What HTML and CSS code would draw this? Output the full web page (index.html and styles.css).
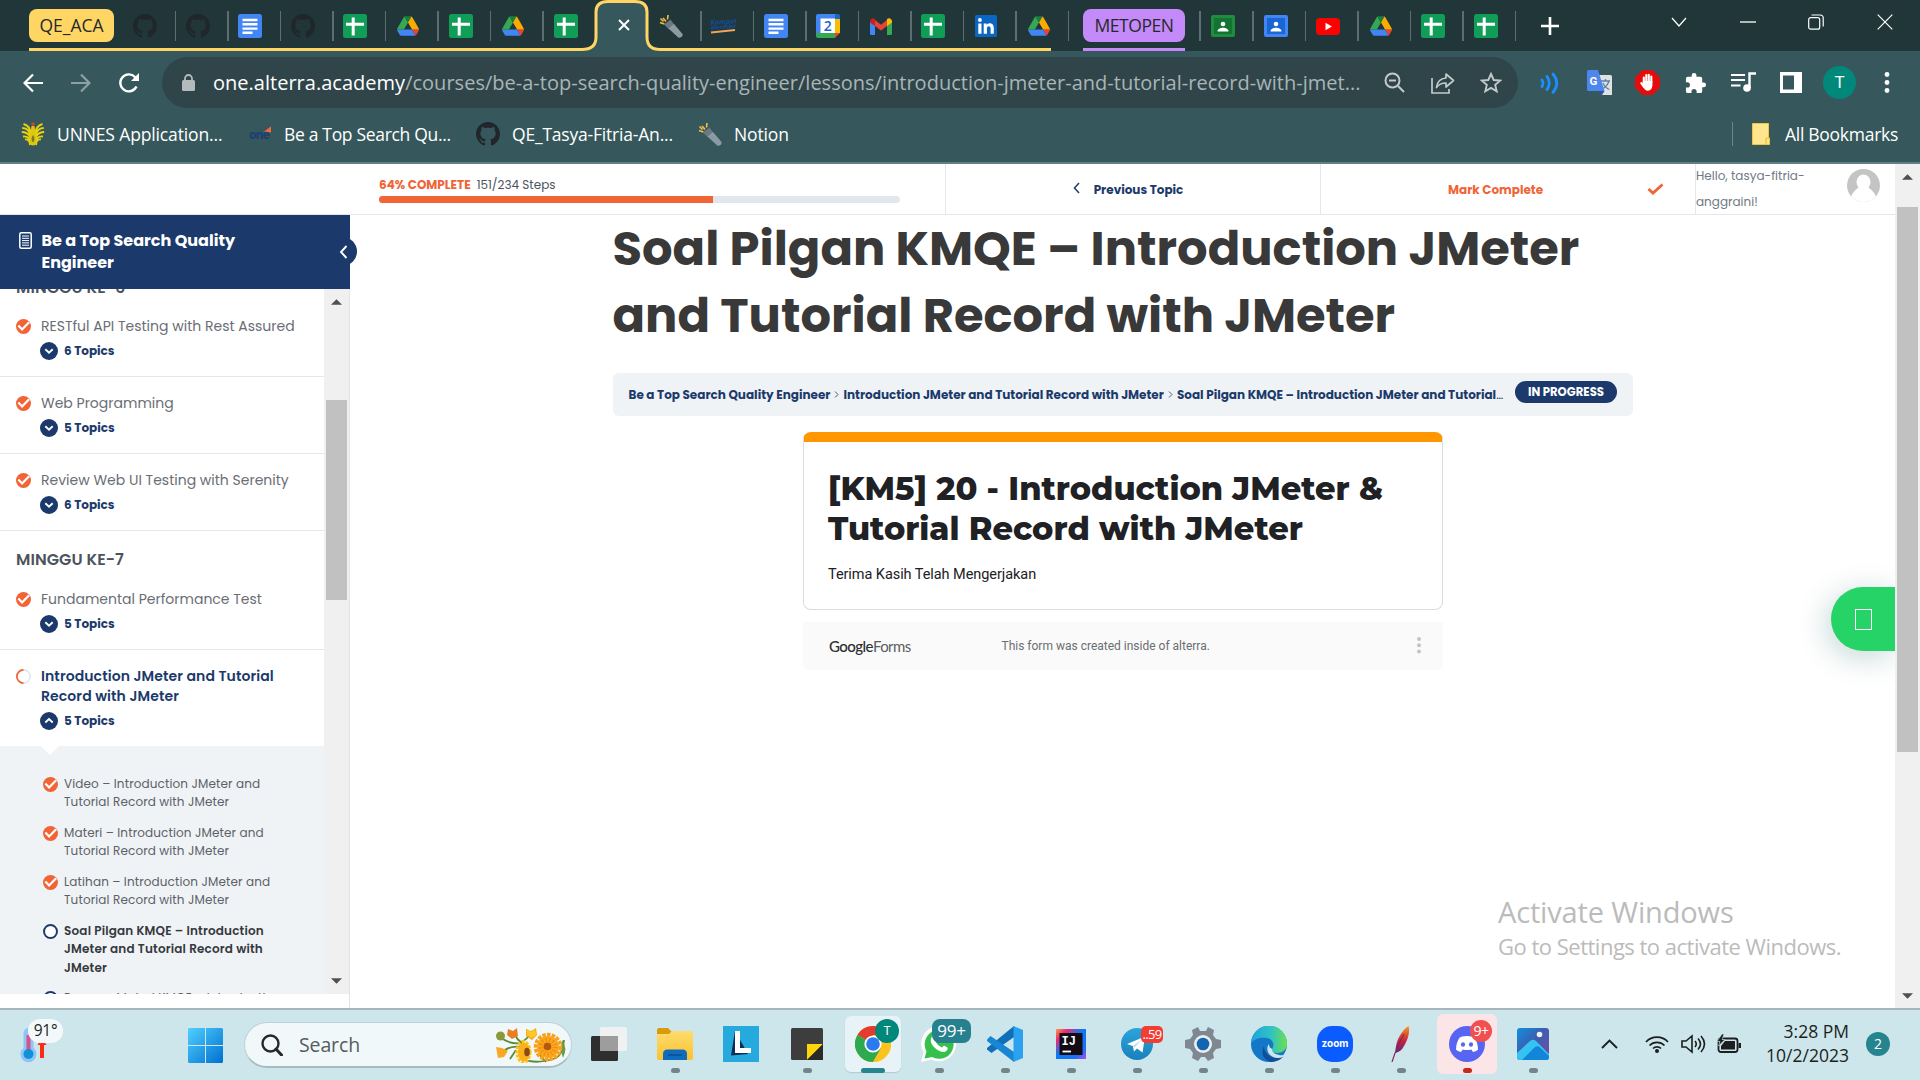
FILE: index.html
```html
<!DOCTYPE html>
<html lang="en">
<head>
<meta charset="utf-8">
<title>Soal Pilgan KMQE – Introduction JMeter and Tutorial Record with JMeter</title>
<link rel="stylesheet" href="styles.css">
</head>
<body>
<svg class="defs" aria-hidden="true">
  <defs>
    <linearGradient id="win" x1="0" y1="0" x2="1" y2="1"><stop offset="0" stop-color="#4fd0ff"/><stop offset="1" stop-color="#0070d0"/></linearGradient>
    <linearGradient id="folderg" x1="0" y1="0" x2="0" y2="1"><stop offset="0" stop-color="#ffdc6e"/><stop offset="1" stop-color="#f9c22e"/></linearGradient>
    <linearGradient id="tgg" x1="0" y1="0" x2="0" y2="1"><stop offset="0" stop-color="#2ca4dc"/><stop offset="1" stop-color="#1a80bb"/></linearGradient>
    <linearGradient id="ijg" x1="0" y1="0" x2="1" y2="1"><stop offset="0" stop-color="#f9a03c"/><stop offset=".2" stop-color="#f0267a"/><stop offset=".45" stop-color="#0a7bf5"/><stop offset=".8" stop-color="#1e6ff5"/><stop offset="1" stop-color="#b54bf0"/></linearGradient>
    <linearGradient id="edgeg" x1="0" y1="0" x2="1" y2="0"><stop offset="0" stop-color="#1fa3e0"/><stop offset=".55" stop-color="#2fc2c4"/><stop offset="1" stop-color="#6be04e"/></linearGradient>
    <linearGradient id="feather" x1="0" y1="1" x2="0" y2="0"><stop offset="0" stop-color="#5a2a82"/><stop offset=".45" stop-color="#c9203c"/><stop offset="1" stop-color="#f79a23"/></linearGradient>
    <linearGradient id="photo" x1="0" y1="0" x2="1" y2="1"><stop offset="0" stop-color="#128fe0"/><stop offset=".45" stop-color="#3b5fb0"/><stop offset="1" stop-color="#7a4aa0"/></linearGradient>
    <symbol id="github" viewBox="0 0 16 16"><path fill="#20262b" d="M8 0C3.58 0 0 3.58 0 8c0 3.54 2.29 6.53 5.47 7.59.4.07.55-.17.55-.38 0-.19-.01-.82-.01-1.49-2.01.37-2.53-.49-2.69-.94-.09-.23-.48-.94-.82-1.13-.28-.15-.68-.52-.01-.53.63-.01 1.08.58 1.23.82.72 1.21 1.87.87 2.33.66.07-.52.28-.87.51-1.07-1.78-.2-3.64-.89-3.64-3.95 0-.87.31-1.59.82-2.15-.08-.2-.36-1.02.08-2.12 0 0 .67-.21 2.2.82.64-.18 1.32-.27 2-.27s1.36.09 2 .27c1.53-1.04 2.2-.82 2.2-.82.44 1.1.16 1.92.08 2.12.51.56.82 1.27.82 2.15 0 3.07-1.87 3.75-3.65 3.95.29.25.54.73.54 1.48 0 1.07-.01 1.93-.01 2.2 0 .21.15.46.55.38A8.01 8.01 0 0 0 16 8c0-4.42-3.58-8-8-8z"/></symbol>
    <symbol id="docs" viewBox="0 0 24 24"><rect width="24" height="24" rx="2.5" fill="#4285f4"/><path d="M4.5 6h15M4.5 10.300h15M4.500 14.600h15M4.500 18.700h10" stroke="#fff" stroke-width="2.400"/></symbol>
    <symbol id="sheets" viewBox="0 0 24 24"><rect width="24" height="24" rx="2.500" fill="#0f9d58"/><path d="M10.200 3.500v18M3 10.200h18" stroke="#fff" stroke-width="3"/></symbol>
    <symbol id="drive" viewBox="0 0 87.300 78"><path fill="#4285f4" d="M6.600 66.850l3.850 6.650c.8 1.400 1.950 2.500 3.300 3.300L27.500 53H0c0 1.550.4 3.100 1.200 4.500zM27.500 53h32.300l13.750 23.800c-1.350.8-2.900 1.200-4.500 1.200H18.250c-1.600 0-3.150-.45-4.500-1.200z"/><path fill="#34a853" d="M43.650 25L29.900 1.200c-1.350.8-2.500 1.900-3.300 3.300L1.200 48.500C.4 49.900 0 51.450 0 53h27.500z"/><path fill="#ea4335" d="M73.550 76.800c1.350-.8 2.500-1.900 3.300-3.300l9.250-16c.8-1.400 1.200-2.950 1.200-4.500H59.800z"/><path fill="#188038" d="M43.650 25L57.400 1.200C56.050.4 54.500 0 52.900 0H34.400c-1.600 0-3.150.45-4.500 1.200z"/><path fill="#fbab00" d="M73.400 26.500L60.700 4.500c-.8-1.400-1.950-2.500-3.300-3.300L43.650 25 59.800 53h27.450c0-1.550-.4-3.100-1.200-4.500z"/></symbol>
    <symbol id="torch" viewBox="0 0 24 24"><path d="M1 8.500l4.500 1.500M4 4l3 3.500M9 1l-.5 4.500M1.500 4.500l3 3" stroke="#f4bd45" stroke-width="1.600"/><path d="M5 10.500L11.500 5.500l4 5.500-5.500 4.500z" fill="#6d7880"/><path d="M9.500 14.500l5.500-4.500 8.500 10c.8 2-2 4.300-4 3.800z" fill="#8c9aa3"/></symbol>
    <symbol id="kampus" viewBox="0 0 26 16"><text x="0" y="7" font-family="Open Sans, sans-serif" font-style="italic" font-weight="700" font-size="7.200" fill="#174d92" transform="rotate(-4)">Kampus</text><text x="0" y="12" font-family="Open Sans, sans-serif" font-style="italic" font-weight="700" font-size="6" fill="#174d92" transform="rotate(-5)">Merdeka</text><path d="M1 14.500L25 12" stroke="#f0a35a" stroke-width="2"/></symbol>
    <symbol id="cal" viewBox="0 0 24 24"><path d="M0 2q0-2 2-2h17v5H5v14H0z" fill="#4285f4"/><path d="M19 0h3q2 0 2 2v3h-5z" fill="#1967d2"/><path d="M19 5h5v14h-5z" fill="#fbbc04"/><path d="M0 19h19v5H2q-2 0-2-2z" fill="#34a853"/><path d="M19 19h5l-5 5z" fill="#ea4335"/><path d="M4.500 4.500H19V19H4.500z" fill="#fff"/><text x="11.800" y="17" text-anchor="middle" font-family="Open Sans, sans-serif" font-size="14" font-weight="600" fill="#1a5fd0">2</text></symbol>
    <symbol id="gmail" viewBox="0 0 22 17"><path d="M0 3v12.500Q0 17 1.500 17H5V7z" fill="#4285f4"/><path d="M22 3v12.500q0 1.500-1.500 1.500H17V7z" fill="#34a853"/><path d="M5 2l6 4.800L17 2v6l-6 4.500L5 8z" fill="#ea4335"/><path d="M0 3.500C0 .5 3-.8 5 1v7L0 4.500z" fill="#c5221f"/><path d="M22 3.500C22 .5 19-.8 17 1v7l5-3.500z" fill="#fbbc04"/></symbol>
    <symbol id="linkedin" viewBox="0 0 22 22"><rect width="22" height="22" rx="1.500" fill="#0a66c2"/><path d="M3.300 8.500h3.200v10.200H3.300zM8.700 8.500h3v1.400c1.600-2.500 7.100-2.200 7.100 2.800v6h-3.200v-5.200c0-3.200-3.700-2.900-3.700 0v5.200H8.700z" fill="#fff"/><circle cx="4.900" cy="5" r="1.900" fill="#fff"/></symbol>
    <symbol id="classg" viewBox="0 0 24 22"><rect width="24" height="22" rx="2" fill="#1e8e3e"/><rect x="3" y="3" width="18" height="16" fill="#137333"/><circle cx="12" cy="9" r="2.300" fill="#fff"/><path d="M6.500 16.500c0-5 11-5 11 0z" fill="#fff"/></symbol>
    <symbol id="classb" viewBox="0 0 24 22"><rect width="24" height="22" rx="2" fill="#4285f4"/><rect x="3" y="3" width="18" height="16" fill="#1967d2"/><circle cx="12" cy="9" r="2.300" fill="#fff"/><path d="M6.500 16.500c0-5 11-5 11 0z" fill="#fff"/></symbol>
    <symbol id="youtube" viewBox="0 0 24 17"><rect width="24" height="17" rx="4" fill="#f00"/><path d="M9.500 4.700l6.500 3.800-6.500 3.800z" fill="#fff"/></symbol>
    <symbol id="check" viewBox="0 0 16 16"><circle cx="8" cy="8" r="8" fill="#f06436"/><path d="M2.500 7l4 4.200L14 3.500" fill="none" stroke="#fff" stroke-width="2.400"/></symbol>
    <symbol id="down" viewBox="0 0 18 18"><circle cx="9" cy="9" r="9" fill="#1b3a6b"/><path d="M5.300 7.300L9 10.700l3.700-3.400" fill="none" stroke="#fff" stroke-width="1.900"/></symbol>
    <symbol id="up" viewBox="0 0 18 18"><circle cx="9" cy="9" r="9" fill="#1b3a6b"/><path d="M5.300 10.500L9 7.100l3.700 3.400" fill="none" stroke="#fff" stroke-width="1.900"/></symbol>
    <symbol id="ring" viewBox="0 0 16 16"><circle cx="8" cy="8" r="6.900" fill="#fff" stroke="#1b3a6b" stroke-width="2.100"/></symbol>
    <symbol id="half" viewBox="0 0 16 16"><circle cx="8" cy="8" r="7.100" fill="none" stroke="#e2e7ed" stroke-width="1.700"/><path d="M8 .9a7.100 7.100 0 0 0 0 14.200" fill="none" stroke="#f06436" stroke-width="1.800"/></symbol>
    <symbol id="tri-up" viewBox="0 0 12 6"><path d="M0 6L6 0l6 6z" fill="#505050"/></symbol>
    <symbol id="tri-down" viewBox="0 0 12 6"><path d="M0 0l6 6 6-6z" fill="#505050"/></symbol>
  </defs>
</svg>

<header class="browser">
  <div class="strip">
    <div class="group">
      <svg class="outline" width="1022" height="52" viewBox="29 0 1022 52"><path d="M582 52Q596 50 596 38V12Q596 1.500 608 1.500h27Q647 1.500 647 12v26q0 12 13 14z" fill="#36585c"/><path d="M29 49.500H582Q596 49.500 596 37V12Q596 1.500 608 1.500h27Q647 1.500 647 12V37q0 12.500 13 12.500H1051" fill="none" stroke="#ffd664" stroke-width="3"/></svg>
      <span class="label label-qe">QE_ACA</span>
      <span class="tab"><svg width="24" height="24"><use href="#github"/></svg></span>
      <span class="tab"><svg width="24" height="24"><use href="#github"/></svg></span>
      <span class="tab"><svg width="24" height="24"><use href="#docs"/></svg></span>
      <span class="tab"><svg width="24" height="24"><use href="#github"/></svg></span>
      <span class="tab"><svg width="24" height="24"><use href="#sheets"/></svg></span>
      <span class="tab"><svg width="22" height="20"><use href="#drive"/></svg></span>
      <span class="tab"><svg width="24" height="24"><use href="#sheets"/></svg></span>
      <span class="tab"><svg width="22" height="20"><use href="#drive"/></svg></span>
      <span class="tab plain"><svg width="24" height="24"><use href="#sheets"/></svg></span>
      <span class="tab active"><svg width="12" height="12" viewBox="0 0 12 12"><path d="M1 1l10 10M11 1L1 11" stroke="#fff" stroke-width="2"/></svg></span>
      <span class="tab"><svg width="24" height="24"><use href="#torch"/></svg></span>
      <span class="tab"><svg width="26" height="16"><use href="#kampus"/></svg></span>
      <span class="tab"><svg width="24" height="24"><use href="#docs"/></svg></span>
      <span class="tab"><svg width="24" height="24"><use href="#cal"/></svg></span>
      <span class="tab"><svg width="22" height="17"><use href="#gmail"/></svg></span>
      <span class="tab"><svg width="24" height="24"><use href="#sheets"/></svg></span>
      <span class="tab"><svg width="22" height="22"><use href="#linkedin"/></svg></span>
      <span class="tab"><svg width="22" height="20"><use href="#drive"/></svg></span>
    </div>
    <div class="group-met"><span class="label label-met">METOPEN</span></div>
    <div class="loose">
      <span class="tab"><svg width="24" height="22"><use href="#classg"/></svg></span>
      <span class="tab"><svg width="24" height="22"><use href="#classb"/></svg></span>
      <span class="tab"><svg width="24" height="17"><use href="#youtube"/></svg></span>
      <span class="tab"><svg width="22" height="20"><use href="#drive"/></svg></span>
      <span class="tab"><svg width="24" height="24"><use href="#sheets"/></svg></span>
      <span class="tab"><svg width="24" height="24"><use href="#sheets"/></svg></span>
    </div>
    <svg class="plus" width="18" height="18" viewBox="0 0 18 18"><path d="M9 0v18M0 9h18" stroke="#fff" stroke-width="2.600"/></svg>
    <div class="window">
      <svg width="16" height="16" viewBox="0 0 16 16"><path d="M1 4l7 8 7-8" fill="none" stroke="#fff" stroke-width="1.200"/></svg>
      <svg width="16" height="16" viewBox="0 0 16 16"><path d="M0 8h16" stroke="#fff" stroke-width="1.300"/></svg>
      <svg width="16" height="16" viewBox="0 0 16 16"><rect x=".7" y="3.700" width="11" height="11.500" rx="2" fill="none" stroke="#fff" stroke-width="1.200"/><path d="M3.500 1h8.500q3.200 0 3.200 3v8.500" fill="none" stroke="#fff" stroke-width="1.200"/></svg>
      <svg width="16" height="16" viewBox="0 0 16 16"><path d="M.7.700l14.600 14.600M15.300.700L.7 15.300" stroke="#fff" stroke-width="1.200"/></svg>
    </div>
  </div>

  <div class="toolbar">
    <svg width="20" height="20" viewBox="0 0 20 20"><path d="M20 10H2M10 1.500L1.500 10l8.500 8.500" fill="none" stroke="#fff" stroke-width="2.200"/></svg>
    <svg class="fwd" width="20" height="20" viewBox="0 0 20 20"><path d="M0 10h18M10 1.500l8.500 8.500-8.500 8.500" fill="none" stroke="#8da0a3" stroke-width="2.200"/></svg>
    <svg class="reload" width="22" height="22" viewBox="0 0 22 22"><path d="M18.500 14.500a8.500 8.500 0 1 1-1.500-9.500l2 2" fill="none" stroke="#fff" stroke-width="2.400"/><path d="M21 1v8h-8z" fill="#fff"/></svg>
    <div class="omnibox">
      <svg width="13" height="17" viewBox="0 0 13 17"><rect y="6" width="13" height="11" rx="1.500" fill="#b4bbbd"/><path d="M3 7V4.500a3.500 3.500 0 0 1 7 0V7" fill="none" stroke="#b4bbbd" stroke-width="1.800"/></svg>
      <span class="url"><b>one.alterra.academy</b>/courses/be-a-top-search-quality-engineer/lessons/introduction-jmeter-and-tutorial-record-with-jmet...</span>
      <svg class="o-zoom" width="21" height="21" viewBox="0 0 21 21"><circle cx="8.500" cy="8.500" r="7" fill="none" stroke="#c3cacb" stroke-width="2"/><path d="M5 8.500h7M14 14l6 6" stroke="#c3cacb" stroke-width="2"/></svg>
      <svg class="o-share" width="24" height="22" viewBox="0 0 24 22"><path d="M1 6v15h17v-4" fill="none" stroke="#c3cacb" stroke-width="1.700"/><path d="M15 2l7.500 6.500L15 15v-4c-4.500 0-7.500 1.500-9.500 4.500C6 10.500 9 6.500 15 6z" fill="none" stroke="#c3cacb" stroke-width="1.700" stroke-linejoin="round"/></svg>
      <svg class="o-star" width="22" height="21" viewBox="0 0 22 21"><path d="M11 2l2.700 6 6.500.600-5 4.300 1.500 6.400L11 15.900l-5.700 3.400 1.500-6.400-5-4.300 6.500-.6z" fill="none" stroke="#c3cacb" stroke-width="1.900"/></svg>
    </div>
    <div class="exts">
      <svg width="21" height="22" viewBox="0 0 21 22"><path d="M2 8q2 3 0 6.500M7 4.500q4.500 6.500 0 13M13 2q7.500 9 0 18.500" fill="none" stroke="#1a90ff" stroke-width="2.800" stroke-linecap="round"/></svg>
      <svg width="25" height="25" viewBox="0 0 25 25"><path d="M9 5h14.500q1.500 0 1.500 1.500V25H15z" fill="#dfe1e3"/><path d="M14 11h9M18.500 9v2M22 11q-2 6-7 8M16 13q2 5 6.500 6.500" fill="none" stroke="#5f7fa0" stroke-width="1.300"/><path d="M1.500 0H11l6.500 21H1.500Q0 21 0 19.500v-18Q0 0 1.500 0z" fill="#4c86ee"/><path d="M12.500 21h5L15 25z" fill="#2a50b8"/><text x="2.500" y="14.500" font-family="Roboto, sans-serif" font-weight="700" font-size="11.500" fill="#fff">G</text></svg>
      <svg width="25" height="25" viewBox="0 0 25 25"><path d="M7.500 0h10L25 7.500v10L17.500 25h-10L0 17.500v-10z" fill="#e40c0c"/><g fill="none" stroke="#fff" stroke-width="2.100" stroke-linecap="round"><path d="M8.800 13V7.500M11.300 12V5M13.800 12V4.800M16.300 12V6.500M6.300 13.200L9 17"/></g><path d="M7.800 11h9.600v4.500q-.5 5-4.500 5.200-3 0-5.100-4.200z" fill="#fff"/></svg>
      <svg width="23" height="22" viewBox="0 0 24 23"><path d="M20.500 11H19V7q0-2-2-2h-4V3.500a2.500 2.500 0 0 0-5 0V5H4Q2 5 2 7v3.800h1.500a2.700 2.700 0 0 1 0 5.400H2V20q0 2 2 2h3.800v-1.500a2.700 2.700 0 0 1 5.400 0V22H17q2 0 2-2v-4h1.500a2.500 2.500 0 0 0 0-5z" fill="#fff"/></svg>
      <svg width="25" height="21" viewBox="0 0 25 21"><path d="M0 3h14M0 8h14M0 13.500h9.500" stroke="#fff" stroke-width="2.200"/><path d="M18.500 16V1.500H25" fill="none" stroke="#fff" stroke-width="2.400"/><circle cx="16" cy="16" r="3.800" fill="#fff"/></svg>
      <svg width="22" height="21" viewBox="0 0 22 21"><path d="M0 0h22v21H0z" fill="#fff"/><path d="M3 3.500h11v14H3z" fill="#36585c"/></svg>
      <span class="avatar">T</span>
      <svg width="6" height="21" viewBox="0 0 6 21"><g fill="#fff"><circle cx="3" cy="2.500" r="2.400"/><circle cx="3" cy="10.500" r="2.400"/><circle cx="3" cy="18.500" r="2.400"/></g></svg>
    </div>
  </div>

  <div class="bookmarks">
    <a class="bm bm1"><svg width="24" height="24" viewBox="0 0 24 24"><g fill="none" stroke="#e8d20a" stroke-width="1.900"><path d="M9 23Q7.500 17 9.500 12 9.500 4 2.500 2M9 12Q7 6 1.200 6M8.500 14Q6 10 .8 10M8 16.500Q5.500 14 2 14.500M8 19q-2-2-4-1.500M15 23q1.500-6-.5-11 0-8 7-10M15 12q2-6 7.800-6M15.500 14q2.500-4 7.700-4M16 16.500q2.500-2.500 6-2M16 19q2-2 4-1.500"/></g><path d="M9 22q-1-7 .5-11L10.500 4h3l1 7q1.500 4 .5 11-3 3-6 0z" fill="#dcc614"/><path d="M12 13q3 4 0 7.500-3-3.500 0-7.500" fill="#7f7a20"/><circle cx="12" cy="2" r="1.800" fill="#d8402a"/></svg>UNNES Application...</a>
    <a class="bm bm2"><svg width="23" height="16" viewBox="0 0 23 16"><text x="0" y="13" font-family="Inter, sans-serif" font-weight="800" font-size="12" letter-spacing="-.7" fill="#1d3f72">one</text><path d="M15 5.500L22 .5v6z" fill="#ee6b3f"/></svg>Be a Top Search Qu...</a>
    <a class="bm bm3"><svg width="24" height="24"><use href="#github"/></svg>QE_Tasya-Fitria-An...</a>
    <a class="bm bm4"><svg width="24" height="24"><use href="#torch"/></svg>Notion</a>
    <a class="bm all"><svg width="18" height="22" viewBox="0 0 18 22"><path d="M.5.500h16V15h1v6.500H.5z" fill="#ffe58c" stroke="#f0c63c"/><path d="M14 21.500V15h3.500" fill="none" stroke="#e8bc2c"/></svg>All Bookmarks</a>
  </div>
</header>

<main class="page">
  <section class="content">
    <div class="topbar">
      <div class="progress">
        <div class="progress-text"><b>64% COMPLETE</b><span>151/234 Steps</span></div>
        <div class="track"><i style="width:64.2%"></i></div>
      </div>
      <div class="prev"><svg width="7" height="12" viewBox="0 0 7 12"><path d="M6 1L1.500 6 6 11" fill="none" stroke="#1b3a6b" stroke-width="1.500"/></svg>Previous Topic</div>
      <div class="mark"><span>Mark Complete</span><svg width="17" height="12" viewBox="0 0 17 12"><path d="M1.500 6L6 10 15.500 1.500" fill="none" stroke="#f06436" stroke-width="2.800"/></svg></div>
      <div class="hello"><span>Hello, tasya-fitria-<br>anggraini!</span><svg width="33" height="33" viewBox="0 0 33 33"><circle cx="16.500" cy="16.500" r="16.500" fill="#c4c4c4"/><clipPath id="av"><circle cx="16.500" cy="16.500" r="16.500"/></clipPath><g fill="#fff" clip-path="url(#av)"><ellipse cx="16.500" cy="13" rx="7" ry="7.500"/><path d="M3 33C3 24 10 20 12 18h9c2 2 9 6 9 15z"/></g></svg></div>
    </div>

    <div class="body">
      <aside class="sidebar">
        <div class="course"><svg width="13" height="17" viewBox="0 0 13 17"><rect x=".8" y=".8" width="11.400" height="15.400" rx="1.500" fill="none" stroke="#fff" stroke-width="1.500"/><path d="M3 4h7M3 6.300h7M3 8.600h7M3 10.900h7M3 13.200h7" stroke="#fff"/></svg><span>Be a Top Search Quality<br>Engineer</span>
          <i class="toggle"><svg width="9" height="14" viewBox="0 0 9 14"><path d="M7.500 1L2 7l5.500 6" fill="none" stroke="#fff" stroke-width="1.900"/></svg></i>
        </div>
        <div class="scroller">
          <div class="lessons">
            <h3 class="week first">MINGGU KE-6</h3>
            <div class="lesson"><svg class="st" width="15" height="15"><use href="#check"/></svg><p>RESTful API Testing with Rest Assured</p><div class="topics"><svg width="18" height="18"><use href="#down"/></svg>6 Topics</div></div>
            <div class="lesson"><svg class="st" width="15" height="15"><use href="#check"/></svg><p>Web Programming</p><div class="topics"><svg width="18" height="18"><use href="#down"/></svg>5 Topics</div></div>
            <div class="lesson"><svg class="st" width="15" height="15"><use href="#check"/></svg><p>Review Web UI Testing with Serenity</p><div class="topics"><svg width="18" height="18"><use href="#down"/></svg>6 Topics</div></div>
            <h3 class="week">MINGGU KE-7</h3>
            <div class="lesson"><svg class="st" width="15" height="15"><use href="#check"/></svg><p>Fundamental Performance Test</p><div class="topics"><svg width="18" height="18"><use href="#down"/></svg>5 Topics</div></div>
            <div class="lesson current"><svg class="st" width="15" height="15"><use href="#half"/></svg><p>Introduction JMeter and Tutorial<br>Record with JMeter</p><div class="topics"><svg width="18" height="18"><use href="#up"/></svg>5 Topics</div></div>
            <ul class="sub">
              <li><svg width="15" height="15"><use href="#check"/></svg><span>Video – Introduction JMeter and<br>Tutorial Record with JMeter</span></li>
              <li><svg width="15" height="15"><use href="#check"/></svg><span>Materi – Introduction JMeter and<br>Tutorial Record with JMeter</span></li>
              <li><svg width="15" height="15"><use href="#check"/></svg><span>Latihan – Introduction JMeter and<br>Tutorial Record with JMeter</span></li>
              <li class="on"><svg width="15" height="15"><use href="#ring"/></svg><span>Soal Pilgan KMQE – Introduction<br>JMeter and Tutorial Record with<br>JMeter</span></li>
              <li><svg width="15" height="15"><use href="#ring"/></svg><span>Resume Materi KMQE – Introduction</span></li>
            </ul>
          </div>
          <div class="bar bar-side"><svg width="11" height="6"><use href="#tri-up"/></svg><i class="thumb"></i><svg class="end" width="11" height="6"><use href="#tri-down"/></svg></div>
        </div>
      </aside>

      <article class="topic">
        <h1>Soal Pilgan KMQE – Introduction JMeter<br>and Tutorial Record with JMeter</h1>
        <nav class="crumbs">
          <span>Be a Top Search Quality Engineer</span><svg width="5" height="7" viewBox="0 0 5 7"><path d="M1 .500l3 3-3 3" fill="none" stroke="#4a5a70"/></svg><span>Introduction JMeter and Tutorial Record with JMeter</span><svg width="5" height="7" viewBox="0 0 5 7"><path d="M1 .500l3 3-3 3" fill="none" stroke="#4a5a70"/></svg><span>Soal Pilgan KMQE – Introduction JMeter and Tutorial<i>…</i></span>
          <em>IN PROGRESS</em>
        </nav>
        <div class="form">
          <h2>[KM5] 20 - Introduction JMeter &amp;<br>Tutorial Record with JMeter</h2>
          <p>Terima Kasih Telah Mengerjakan</p>
        </div>
        <footer class="gforms"><span class="logo"><b>Google</b>Forms</span><span class="note">This form was created inside of alterra.</span><svg width="4" height="17" viewBox="0 0 4 17"><g fill="#c4c4c4"><circle cx="2" cy="2" r="2"/><circle cx="2" cy="8.300" r="2"/><circle cx="2" cy="14.600" r="2"/></g></svg></footer>
      </article>
    </div>
  </section>
  <div class="bar bar-page"><svg width="11" height="6"><use href="#tri-up"/></svg><i class="thumb"></i><svg class="end" width="11" height="6"><use href="#tri-down"/></svg></div>
  <div class="chat"><i></i></div>
  <div class="watermark"><p class="wm1">Activate Windows</p><p class="wm2">Go to Settings to activate Windows.</p></div>
</main>

<footer class="taskbar">
  <div class="weather"><svg width="28" height="36" viewBox="0 0 28 36"><path d="M3.500 6a5 5 0 0 1 10 0v15a8 8 0 1 1-10 0z" fill="#8cc6f5"/><path d="M8.500 8v18" stroke="#d9508a" stroke-width="4"/><circle cx="8.500" cy="27" r="5" fill="#1490d8"/><path d="M22 31V17" stroke="#fb2c10" stroke-width="4"/><path d="M17.500 18L22 11l4.500 7z" fill="#fb2c10"/></svg><span>91°</span></div>
  <svg class="start" width="35" height="35" viewBox="0 0 35 35"><path d="M1.500 0H17v17H0V1.500Q0 0 1.500 0zM18 0h15.500Q35 0 35 1.500V17H18zM0 18h17v17H1.500Q0 35 0 33.500zM18 18h17v15.500q0 1.500-1.500 1.500H18z" fill="url(#win)"/></svg>
  <div class="search">
    <svg width="22" height="22" viewBox="0 0 22 22"><circle cx="9.500" cy="9.500" r="8" fill="none" stroke="#26292b" stroke-width="2.400"/><path d="M15 15l5.500 6" stroke="#26292b" stroke-width="3" stroke-linecap="round"/></svg>
    <span>Search</span>
    <svg class="flowers" width="72" height="36" viewBox="0 0 72 36"><g fill="none" stroke="#5d8a35" stroke-width="1.800"><path d="M4 10q10 8 22 6M6 26q6-8 20-6M18 5q2 8 10 12M34 8q-4 5-10 8M26 32q14 6 34-1q7-4 8-18M14 32l6-9M44 28l6 7"/></g><circle cx="4.500" cy="9" r="4.500" fill="#8a9a3a"/><path d="M12 2l5 2 4-3 1 8-6 3-5-4z" fill="#e87f22"/><path d="M30 2l5 2 5-3 1 7-5 5-6-4z" fill="#f7a81e"/><path d="M31 2l4 3 4-3 1 6-4 3-5-3z" fill="#ffca28"/><path d="M0 20l6 1 6 3-4 6-6 1z" fill="#f9a825"/><path d="M66 13q6 8 1 18-3-8-1-18z" fill="#6d9a42"/><g><ellipse cx="27.500" cy="25" rx="6" ry="10" fill="none" stroke="#ffc31f" stroke-width="4" stroke-dasharray="2.800 1.200"/><ellipse cx="28" cy="25" rx="6" ry="9.500" fill="#fbb21a"/><ellipse cx="31" cy="25" rx="2.800" ry="4.300" fill="#8a4a14"/><circle cx="52" cy="20" r="12" fill="none" stroke="#fba01c" stroke-width="4.500" stroke-dasharray="3.400 1.200"/><circle cx="52" cy="20" r="11" fill="#fba71c"/><circle cx="52" cy="20" r="7" fill="none" stroke="#e98a14" stroke-width="5" stroke-dasharray="1 2.400"/><circle cx="51.500" cy="19.500" r="3.800" fill="#b5580f"/></g></svg>
  </div>
  <div class="apps">
    <span class="app none"><svg width="36" height="36" viewBox="0 0 36 36"><rect x="0" y="10" width="27" height="25" rx="1.500" fill="#2e2e2e"/><rect x="9" y="1" width="27" height="24" rx="1.500" fill="#f2f2f2" fill-opacity=".93"/><path d="M9 10h18v15H9z" fill="#9d9d9d"/></svg></span>
    <span class="app"><svg width="36" height="36" viewBox="0 0 36 36"><path d="M0 4q0-2 2-2h9l4 4h-1v6H0z" fill="#d99a0c"/><path d="M0 8h12l3-3h19q2 0 2 2v25q0 2-2 2H2q-2 0-2-2z" fill="url(#folderg)"/><path d="M6 34v-6q0-4.500 4.500-4.500h15Q30 23.500 30 28v6z" fill="#0f6cbd"/><path d="M11 29h14" stroke="#0b4f90" stroke-width="1.500"/></svg></span>
    <span class="app none"><svg width="36" height="36" viewBox="0 0 36 36"><path d="M0 0h36v36H0z" fill="#26a9dc"/><path d="M12 5L8 29.500 25 28z" fill="#0d2d52"/><path d="M12 5h5v17h11v5H12z" fill="#fff"/></svg></span>
    <span class="app"><svg width="32" height="34" viewBox="0 0 32 34"><rect y="1" width="32" height="32" rx="1.500" fill="#3d3d3d"/><path d="M16 17h16L16 33z" fill="#ffd60a"/><path d="M16 33l16-16v16z" fill="#2a2a2a"/></svg></span>
    <span class="app sel"><svg width="36" height="36" viewBox="0 0 36 36"><circle cx="18" cy="18" r="18" fill="#fbc116"/><path d="M18 18L2.400 9A18 18 0 0 1 33.600 9z" fill="#e33b2e"/><path d="M2.400 9A18 18 0 0 0 18 36l8-13.500-8-4.500z" fill="#2da94f"/><path d="M33.600 9H18v9l7.800 4.500L18 36A18 18 0 0 0 33.600 9z" fill="#fcc31c"/><circle cx="18" cy="18" r="8.600" fill="#fff"/><circle cx="18" cy="18" r="6.800" fill="#2a7bf0"/></svg><b class="badge-t">T</b></span>
    <span class="app"><svg width="36" height="36" viewBox="0 0 36 36"><path d="M0 36l2.500-9.500A17.500 17.500 0 1 1 10 33.500z" fill="#fff"/><path d="M3.500 32.500l2-7A14.500 14.500 0 1 1 11 31z" fill="#35c14b"/><path d="M12 9.500q1.500-1 2.500.5l1.300 3q.3 1-1.300 2.500 2.500 4.500 6.500 6 1.500-2 2.300-1.700l3.200 1.700q1 2-2 4-3 1.500-8-1.500-5-3.500-6.500-7.500-1-4.500 2-7z" fill="#fff"/></svg><b class="badge-wa">99+</b></span>
    <span class="app"><svg width="36" height="36" viewBox="0 0 36 36"><path d="M27 0v11L4.500 27 0 23.500V22z" fill="#0f6fb8"/><path d="M0 13.500L3.500 10 27 26v10L0 15z" fill="#1886d3"/><path d="M26.500 0L36 4v28l-9.500 4z" fill="#2ba2f0"/></svg></span>
    <span class="app"><svg width="30" height="30" viewBox="0 0 30 30"><path d="M0 0h30v30H0z" fill="url(#ijg)"/><path d="M3.500 4h23v22h-23z" fill="#120c14"/><text x="5.500" y="15.500" font-family="Liberation Mono, monospace" font-weight="700" font-size="12" fill="#fff">IJ</text><path d="M6.500 22.500h8.500" stroke="#fff" stroke-width="1.800"/></svg></span>
    <span class="app"><svg width="32" height="32" viewBox="0 0 32 32"><circle cx="16" cy="16" r="16" fill="url(#tgg)"/><path d="M6 16L24 8.500 21.500 24.500 16 20.500l-3 3-1.200-5.500z" fill="#fff"/><path d="M12 18l9-6.500-7.500 8z" fill="#b9d9ec"/></svg><b class="badge-tg">..59</b></span>
    <span class="app"><svg width="36" height="36" viewBox="0 0 36 36"><path d="M13 1l2 4h6l2-4 6 3-1 5 3 4 5 1v8l-5 1-3 4 1 5-6 3-3-4h-4l-3 4-6-3 1-5-3-4-5-1v-8l5-1 3-4-1-5z" fill="#7f8790"/><circle cx="18" cy="18" r="9" fill="#e9eef2"/><circle cx="18" cy="18" r="6.300" fill="#1265b0"/></svg></span>
    <span class="app"><svg width="36" height="36" viewBox="0 0 36 36"><circle cx="18" cy="18" r="18" fill="#1577c8"/><path d="M0 17A18 18 0 0 1 36 18c0 6-5 9-10 9-4 0-6-2-5-4 3-4 1-10-5-11C9 11 3 13 0 17z" fill="url(#edgeg)"/><path d="M13 20c0 7 6 12 13 12 3 0 5-.7 7-2A18 18 0 0 1 20 36C13 34 9 28 13 20z" fill="#124f96"/><path d="M21 23c-1-1-3-1-3-5-3 3-3 13 9 14 3 0 6-1 7-3-6 1-13-1-13-6z" fill="#cde5eb"/></svg></span>
    <span class="app"><svg width="36" height="36" viewBox="0 0 36 36"><rect width="36" height="36" rx="15" fill="#0b5cff"/><text x="18" y="21" text-anchor="middle" font-family="Inter, sans-serif" font-weight="700" font-size="10" fill="#fff">zoom</text></svg></span>
    <span class="app"><svg width="20" height="36" viewBox="0 0 20 36"><path d="M4.500 27C4 14 12 3 17.500 0c1.500 4 .5 12-4.500 20-2 4-5 6-8.500 7z" fill="url(#feather)"/><path d="M13 8Q6 20 1 36" fill="none" stroke="#7a2a5a" stroke-width="1.200"/></svg></span>
    <span class="app alert"><svg width="36" height="36" viewBox="0 0 36 36"><circle cx="18" cy="18" r="18" fill="#5865f2"/><path d="M13 10.500q5-1 10 0l2.500 1.200q3.500 5 3.500 12-2.500 2-5 2.300l-1.700-2.500q-4.300 1-8.600 0L12 26q-2.500-.3-5-2.300 0-7 3.500-12z" fill="#fff"/><ellipse cx="14" cy="18.500" rx="2.100" ry="2.300" fill="#5865f2"/><ellipse cx="22" cy="18.500" rx="2.100" ry="2.300" fill="#5865f2"/></svg><b class="badge-dc">9+</b></span>
    <span class="app"><svg width="32" height="32" viewBox="0 0 32 32"><rect width="32" height="32" rx="3" fill="url(#photo)"/><path d="M0 25L13 13q3-2.500 6 0l13 13v3q0 3-3 3H3q-3 0-3-3z" fill="#35c3f3"/><path d="M5 32L18 19q2.500-1.500 4.500 0L32 28v1q0 3-3 3z" fill="#1186d8"/><circle cx="22.500" cy="6.500" r="2.800" fill="#f3f0f5"/></svg></span>
  </div>
  <div class="tray">
    <svg class="t1" width="17" height="10" viewBox="0 0 17 10"><path d="M1 9l7.500-7.500L16 9" fill="none" stroke="#1c1f20" stroke-width="1.900"/></svg>
    <svg class="t2" width="24" height="18" viewBox="0 0 24 18"><g fill="none" stroke="#1c1f20" stroke-width="1.700"><path d="M1 7a15 15 0 0 1 22 0M4.500 10.500a10.500 10.500 0 0 1 15 0M8 13.500a5.700 5.700 0 0 1 8 0"/></g><circle cx="12" cy="16" r="2" fill="#1c1f20"/></svg>
    <svg class="t3" width="25" height="20" viewBox="0 0 25 20"><g fill="none" stroke="#1c1f20" stroke-width="1.600"><path d="M1 7h4l6-5v16l-6-5H1zM14 7q2.500 3 0 6M17 4.500q5 5.500 0 11M20 2q7 8 0 16"/></g></svg>
    <svg class="t4" width="24" height="20" viewBox="0 0 24 20"><rect x="1.500" y="4.500" width="19" height="13.500" rx="2.500" fill="none" stroke="#1c1f20" stroke-width="1.800"/><path d="M8 7h10v8.500H4V12z" fill="#1c1f20"/><path d="M21.500 9h2.500v5h-2.500z" fill="#1c1f20"/><path d="M5 0L0 7.500h3L1.500 12 8 5.500H5L7 0z" fill="#1c1f20" stroke="#cde5eb" stroke-width=".6"/></svg>
    <div class="clock"><span>3:28 PM</span><span>10/2/2023</span></div>
    <b class="count">2</b>
  </div>
</footer>
</body>
</html>
```
FILE: styles.css
```css
* { box-sizing: border-box; }
body, h1, h2, h3, p, ul { margin: 0; padding: 0; }
svg { display: block; flex: none; }
.defs { position: absolute; width: 0; height: 0; }

body {
  width: 1920px;
  height: 1080px;
  overflow: hidden;
  display: grid;
  grid-template-rows: 164px 844px 72px;
  background: #fff;
  font-family: "Poppins", "Inter", sans-serif;
}

/* Browser chrome */
.browser, .taskbar, .watermark { font-family: "Segoe UI", "Open Sans", "Noto Sans", sans-serif; }
.browser {
  display: grid;
  grid-template-rows: 51px 62px 1fr;
  background: #36585c;
  border-bottom: 2px solid #5f8085;
  color: #fff;
}
.strip { display: flex; background: #203639; padding-left: 29px; }
.group { position: relative; display: flex; width: 1039.5px; height: 51px; }
.outline { position: absolute; left: 0; top: 0; }
.label {
  position: relative;
  height: 33px;
  margin-top: 9px;
  border-radius: 8px;
  text-align: center;
  font-size: 17.5px;
  line-height: 33px;
  color: #24292b;
  flex: none;
}
.label-qe { width: 85px; margin-right: 8.5px; background: #ffd664; }
.group-met { width: 102px; margin-left: 14.5px; height: 51px; border-bottom: 3px solid #c58af9; display: flex; }
.label-met { width: 102px; background: #c58af9; letter-spacing: -.45px; }
.tab {
  position: relative;
  width: 52.55px;
  height: 52px;
  padding-right: 7px;
  display: flex;
  align-items: center;
  justify-content: center;
  flex: none;
}
.tab::after { content: ""; position: absolute; right: -1px; top: 11px; width: 1.5px; height: 30px; background: #5d6d70; }
.tab.plain::after, .tab.active::after { display: none; }
.tab.active { padding: 0 0 2px 4px; }
.loose { display: flex; margin-left: 15px; position: relative; }
.loose .tab { padding-right: 6px; }
.loose::before { content: ""; position: absolute; left: -1px; top: 11px; width: 1.5px; height: 30px; background: #5d6d70; }
.plus { margin: 16.5px 0 0 25.5px; }
.window { display: flex; gap: 52.5px; margin: 14px 0 0 112.5px; }

.toolbar { display: flex; align-items: center; padding: 0 0 0 23px; }
.fwd { margin-left: 28px; }
.reload { margin-left: 27px; }
.omnibox { display: flex; align-items: center; width: 1356px; height: 51px; margin-left: 22px; padding-left: 20px; border-radius: 26px; background: #2f4549; }
.toolbar > * { margin-top: 1px; }
.url { width: 1149px; margin-left: 18px; font-size: 20px; line-height: 28px; letter-spacing: .015px; white-space: nowrap; color: #a9b5b7; }
.url b { font-weight: 400; color: #fff; }
.o-zoom { margin-left: 22px; }
.o-share { margin-left: 26px; }
.o-star { margin-left: 25px; }
.exts { display: flex; align-items: center; margin-left: 22px; }
.exts > :nth-child(2) { margin-left: 26px; }
.exts > :nth-child(3) { margin-left: 23px; }
.exts > :nth-child(4) { margin-left: 24px; }
.exts > :nth-child(5) { margin-left: 24px; }
.exts > :nth-child(6) { margin-left: 24px; }
.exts > :nth-child(8) { margin-left: 28px; }
.avatar { width: 33px; height: 33px; margin-left: 21px; border-radius: 50%; background: #00897b; text-align: center; font: 17px/33px "Roboto", sans-serif; }

.bookmarks { display: flex; align-items: center; padding: 0 22px 7px 21px; font-size: 17.5px; line-height: 24px; }
.bm { display: flex; align-items: center; gap: 12px; white-space: nowrap; letter-spacing: -.13px; }
.bm1 { width: 228px; }
.bm2 { width: 227px; letter-spacing: -.32px; }
.bm3 { width: 222px; letter-spacing: -.2px; }
.all { margin-left: auto; gap: 15px; padding-left: 19px; letter-spacing: -.28px; border-left: 1.5px solid #6d8689; }

/* Course page */
.page { position: relative; display: grid; grid-template-columns: 1895px 25px; min-height: 0; }
.content { display: grid; grid-template-rows: 51px 1fr; grid-template-columns: 1895px; min-height: 0; }
.topbar { display: grid; grid-template-columns: 945px 375px 375px 200px; border-bottom: 1.5px solid #e2e7ed; font-size: 12px; }
.topbar > div + div { border-left: 1px solid #e2e7ed; }
.progress { padding: 13px 45px 0 379px; line-height: 16px; }
.progress-text { display: flex; gap: 6px; color: #4d5560; }
.progress b { color: #f06436; }
.track { height: 7px; margin-top: 3px; border-radius: 4px; background: #e2e7ed; overflow: hidden; }
.track i { display: block; height: 7px; background: #f06436; }
.prev { display: flex; align-items: center; justify-content: center; gap: 14px; padding: 0 10px 0 0; font-weight: 700; color: #1b3a6b; }
.prev svg { margin-bottom: 3px; }
.mark { display: flex; align-items: center; padding: 0 31px 0 127px; justify-content: space-between; font-weight: 700; color: #f06436; }
.mark svg { margin-bottom: 2px; }
.hello { display: flex; justify-content: space-between; padding: 0 15px 0 0; color: #6f7a83; line-height: 26px; }
.hello svg { margin-top: 5px; }
.hello span { margin-top: -1px; }

.body { display: grid; grid-template-columns: 350px minmax(0, 1fr); min-height: 0; }
.sidebar { display: grid; grid-template-rows: 74px 705px; border-right: 1px solid #dfe4ea; min-height: 0; }
.course { position: relative; z-index: 2; display: flex; width: 350px; gap: 10px; padding: 15px 0 0 18.5px; background: #1b3a6b; color: #fff; font-size: 16px; font-weight: 700; line-height: 22px; }
.course > svg { margin-top: 2px; }
.toggle { position: absolute; right: -7px; top: 22px; width: 29px; height: 29px; border-radius: 50%; background: #1b3a6b; display: flex; align-items: center; padding-left: 11px; }
.scroller { display: grid; grid-template-columns: 324px 25px; overflow: hidden; }
.lessons { overflow: hidden; height: 705px; }
.week { height: 42px; padding: 17px 16px 0; font-size: 16px; line-height: 24px; font-weight: 600; letter-spacing: .05px; color: #4d535c; }
.week.first { margin-top: -31px; padding-top: 18px; }
.lesson { position: relative; height: 77px; padding: 16px 0 0 41px; border-bottom: 1.5px solid #e2e7ed; font-size: 14px; line-height: 20px; color: #6a6e75; }
.lesson p { white-space: nowrap; }
.st { position: absolute; left: 16px; top: 18.5px; }
.topics { display: flex; align-items: center; gap: 6px; height: 20px; margin: 5px 0 0 -1px; font-size: 12px; font-weight: 700; color: #1b3a6b; }
.current { height: 96px; border: 0; color: #1b3a6b; font-weight: 600; }
.current p { letter-spacing: .1px; }
.sub { position: relative; list-style: none; height: 300px; padding: 29px 0 0 43px; background: #eff3f6; font-size: 12px; line-height: 18.25px; letter-spacing: .12px; color: #5c6168; }
.sub::before { content: ""; position: absolute; left: 41px; top: 0; border: solid transparent; border-width: 9px 9px 0; border-top-color: #fff; }
.sub li { display: flex; gap: 6px; margin-bottom: 12.5px; white-space: nowrap; }
.sub svg { margin-top: 1.5px; }
.sub .on { font-weight: 600; letter-spacing: .18px; color: #35383d; }

.bar { display: flex; flex-direction: column; align-items: center; background: #f0f0f0; }
.thumb { width: 21px; background: #c1c1c1; }
.end { margin-top: auto; }
.bar-side { padding: 10px 0 10px; height: 705px; }
.bar-side .thumb { height: 200px; margin-top: 95px; }
.bar-page { padding: 10px 0 9px; }
.bar-page .thumb { height: 545px; margin-top: 27px; }

.topic { padding: 0 262px 0 263px; }
h1 { font-size: 48px; line-height: 67px; font-weight: 700; color: #393939; white-space: nowrap; margin-left: -.5px; }
.crumbs { display: flex; align-items: center; height: 43px; margin-top: 24px; padding: 0 16px 0 15.5px; border-radius: 6px; background: #eff3f6; font-size: 12px; font-weight: 700; color: #1b3a6b; white-space: nowrap; }
.crumbs > svg { margin: 0 4px; }
.crumbs i { font-style: normal; font-weight: 400; }
.crumbs em { width: 102px; height: 22px; margin: 0 0 5px auto; border-radius: 11px; background: #1b3a6b; color: #fff; text-align: center; font: 700 11.7px/22px "Poppins", "Inter", sans-serif; }
.form { width: 640px; height: 178px; margin: 16px auto 0 190px; padding: 36px 24px 0; border: 1px solid #dadce0; border-top: 10px solid #ff9800; border-radius: 8px; }
h2 { font-family: "Montserrat", "Inter", sans-serif; font-size: 32px; line-height: 40px; font-weight: 800; color: #202124; white-space: nowrap; margin-top: -9px; }
.form p { margin-top: 16px; font: 14.5px/20px "Roboto", sans-serif; letter-spacing: -.06px; color: #202124; }
.gforms { display: flex; align-items: center; width: 640px; height: 48px; margin: 12px 0 0 190px; padding: 0 22px 1px 26px; border-radius: 0 0 6px 6px; background: #fafafa; font: 12px/16px "Roboto", sans-serif; color: #6b6e72; }
.logo { width: 172.5px; font: 15px/20px "Lato", sans-serif; letter-spacing: -.56px; color: #5a5d60; }
.logo b { font-weight: 500; color: #2c2e30; }
.gforms svg { margin-left: auto; }

.chat { position: absolute; left: 1831px; top: 423px; width: 64px; height: 64px; border-radius: 32px 0 0 32px; background: #25d366; display: flex; align-items: center; justify-content: center; box-shadow: -4px 6px 30px rgba(7, 94, 84, .24); clip-path: inset(-50px 0 -50px -50px); }
.chat i { width: 17px; height: 21px; border: 1px solid #fff; }
.watermark { position: absolute; left: 1498px; top: 728px; color: #bbb; white-space: nowrap; }
.wm1 { font-size: 29px; line-height: 40px; letter-spacing: -.15px; }
.wm2 { font-size: 22px; line-height: 28px; letter-spacing: -.5px; }

/* Taskbar */
.taskbar { display: flex; align-items: center; border-top: 2px solid #a5b7bc; background: #cde6eb; color: #1c1f20; }
.weather { position: relative; width: 168px; padding-left: 20px; margin-right: 20px; }
.weather span { position: absolute; left: 28px; top: -8px; width: 35px; height: 24px; border-radius: 12px; background: #f3f9fb; text-align: center; font-size: 15.5px; line-height: 23px; letter-spacing: -.3px; }
.search { display: flex; align-items: center; width: 328px; height: 46px; margin-left: 21px; padding-left: 16px; border-radius: 24px; background: #f1f8fa; border: 1px solid #bcd2d8; border-bottom: 2px solid #a5bcc2; }
.search span { margin-left: 16px; font-size: 19.5px; letter-spacing: -.12px; color: #555b5e; }
.flowers { margin-left: auto; margin-right: 3px; }
.apps { display: flex; margin-left: 4px; }
.app { position: relative; width: 66px; height: 70px; display: flex; align-items: center; justify-content: center; padding-bottom: 2px; flex: none; }
.app svg { position: relative; }
.app::after { content: ""; position: absolute; left: 29px; bottom: 7px; width: 9px; height: 5px; border-radius: 3px; background: #74858a; }
.app.none::after { display: none; }
.app.sel::before, .app.alert::before { content: ""; position: absolute; left: 5px; top: 6px; width: 56px; height: 56px; border-radius: 6px; background: #e8f3f7; box-shadow: 0 1px 1px #b5c8ce; }
.app.alert::before { left: 3px; top: 4px; width: 60px; height: 60px; background: #fbe5e7; box-shadow: none; }
.app.sel::after { left: 21px; width: 24px; background: #26848f; }
.app.alert::after { background: #c42b1c; }
.app b { position: absolute; text-align: center; font-weight: 400; color: #fff; }
.badge-t { left: 35px; top: 9px; width: 24px; height: 24px; border-radius: 50%; background: #00897b; font: 12px/24px "Roboto", sans-serif; }
.badge-wa { left: 26px; top: 9px; width: 39px; height: 24px; border-radius: 8px; background: #26808d; font-size: 17px; line-height: 24px; letter-spacing: -.3px; }
.badge-tg { left: 37px; top: 16px; width: 22px; height: 17px; border-radius: 5px; background: #f23c34; font-size: 13px; line-height: 17px; letter-spacing: -.7px; }
.badge-dc { left: 36px; top: 10px; width: 22px; height: 22px; border-radius: 50%; background: #f0504f; font-size: 14px; line-height: 21px; letter-spacing: -.5px; }
.tray { display: flex; align-items: center; flex: 1; margin-left: 35px; padding-bottom: 2px; }
.t2 { margin-left: 27px; }
.t3 { margin-left: 12px; }
.t4 { margin-left: 11px; }
.clock { display: flex; flex-direction: column; align-items: flex-end; width: 97px; margin: 0 0 2px 11px; font-size: 17.5px; line-height: 24px; white-space: nowrap; }
.count { width: 24px; height: 24px; margin-left: 17px; border-radius: 50%; background: #26848f; color: #fff; text-align: center; font-size: 14px; font-weight: 400; line-height: 24px; }
```
